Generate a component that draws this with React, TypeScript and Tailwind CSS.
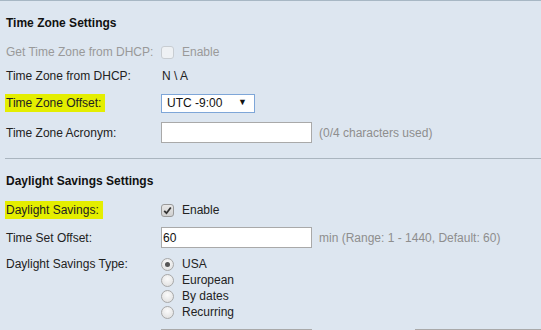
import React from "react";

const font = { fontFamily: '"Liberation Sans", Arial, sans-serif' };

function Check({ checked, disabled }: { checked?: boolean; disabled?: boolean }) {
  return (
    <span
      className={`flex h-[13px] w-[13px] items-center justify-center rounded-[3px] border ${
        disabled ? "border-[#c8cdd2] bg-[#eef1f4]" : "border-[#9a9a9a] bg-[linear-gradient(#e8e8e8,#d0d0d0)]"
      }`}
    >
      {checked && (
        <svg width="9" height="9" viewBox="0 0 9 9">
          <path d="M1.2 4.8 L3.5 7.2 L7.8 1.5" stroke="#333" strokeWidth="1.8" fill="none" />
        </svg>
      )}
    </span>
  );
}

function Radio({ checked, label }: { checked?: boolean; label: string }) {
  return (
    <div className="flex h-4 items-center">
      <span className="flex h-[13px] w-[13px] items-center justify-center rounded-full border border-[#a8a8a8] bg-[radial-gradient(circle_at_50%_35%,#fbfbfb,#dcdcdc)]">
        {checked && <span className="h-[5px] w-[5px] rounded-full bg-[#555]" />}
      </span>
      <span className="ml-[8px] text-[12px] text-[#222]">{label}</span>
    </div>
  );
}

function Row({ label, children, hl, gray, className = "" }: { label: string; children?: React.ReactNode; hl?: boolean; gray?: boolean; className?: string }) {
  return (
    <div className={`flex h-5 items-center ${className}`}>
      <div className="w-[156px] shrink-0">
        <span
          className={`inline-block pl-px pr-[4px] leading-[18px] ${hl ? "bg-[#e4ee00]" : ""} ${gray ? "text-[#999]" : "text-[#222]"}`}
        >
          {label}
        </span>
      </div>
      {children}
    </div>
  );
}

export default function App() {
  return (
    <div className="h-[330px] w-[541px] overflow-hidden border-t border-[#a7b7c4] bg-[#dde6f0] text-[12px]" style={font}>
      <div className="flex flex-col pl-[5px]">
        <div className="mt-[12px] flex h-5 items-center pl-px font-bold text-[#111]">Time Zone Settings</div>
        <Row label="Get Time Zone from DHCP:" gray className="mt-[9px]">
          <Check disabled />
          <span className="ml-[8px] text-[#9a9a9a]">Enable</span>
        </Row>
        <Row label="Time Zone from DHCP:" className="mt-[4px]">
          <span className="pl-px text-[#222]">N \ A</span>
        </Row>
        <Row label="Time Zone Offset:" hl className="mt-[7px]">
          <div className="flex h-[19px] w-[94px] items-center justify-between border border-[#7ea6d8] bg-white pl-[5px] pr-[7px] text-[#111]">
            <span>UTC -9:00</span>
            <span className="text-[9px]">▼</span>
          </div>
        </Row>
        <Row label="Time Zone Acronym:" className="mt-[9px] h-[21px]">
          <div className="h-[21px] w-[151px] border border-[#a9a9a9] bg-white" />
          <span className="ml-[7px] text-[#8e8e8e]">(0/4 characters used)</span>
        </Row>
        <div className="mt-[15px] h-px bg-[#aab5bf]" />
        <div className="mt-[12px] flex h-5 items-center pl-px font-bold text-[#111]">Daylight Savings Settings</div>
        <Row label="Daylight Savings:" hl className="mt-[9px]">
          <Check checked />
          <span className="ml-[8px] text-[#222]">Enable</span>
        </Row>
        <Row label="Time Set Offset:" className="mt-[7px] h-[21px]">
          <div className="flex h-[21px] w-[151px] items-center border border-[#a9a9a9] bg-white pl-[1px] text-[#111]">60</div>
          <span className="ml-[7px] text-[#8e8e8e]">min (Range: 1 - 1440, Default: 60)</span>
        </Row>
        <div className="mt-[8px] flex">
          <div className="w-[156px] shrink-0 pl-px leading-4 text-[#222]">Daylight Savings Type:</div>
          <div className="flex flex-col">
            <Radio checked label="USA" />
            <Radio label="European" />
            <Radio label="By dates" />
            <Radio label="Recurring" />
          </div>
        </div>
        <div className="mt-[9px] flex">
          <div className="ml-[156px] h-[21px] w-[151px] border border-[#a9a9a9] bg-white" />
          <div className="ml-[103px] h-[21px] flex-1 border border-[#a9a9a9] bg-white" />
        </div>
      </div>
    </div>
  );
}
